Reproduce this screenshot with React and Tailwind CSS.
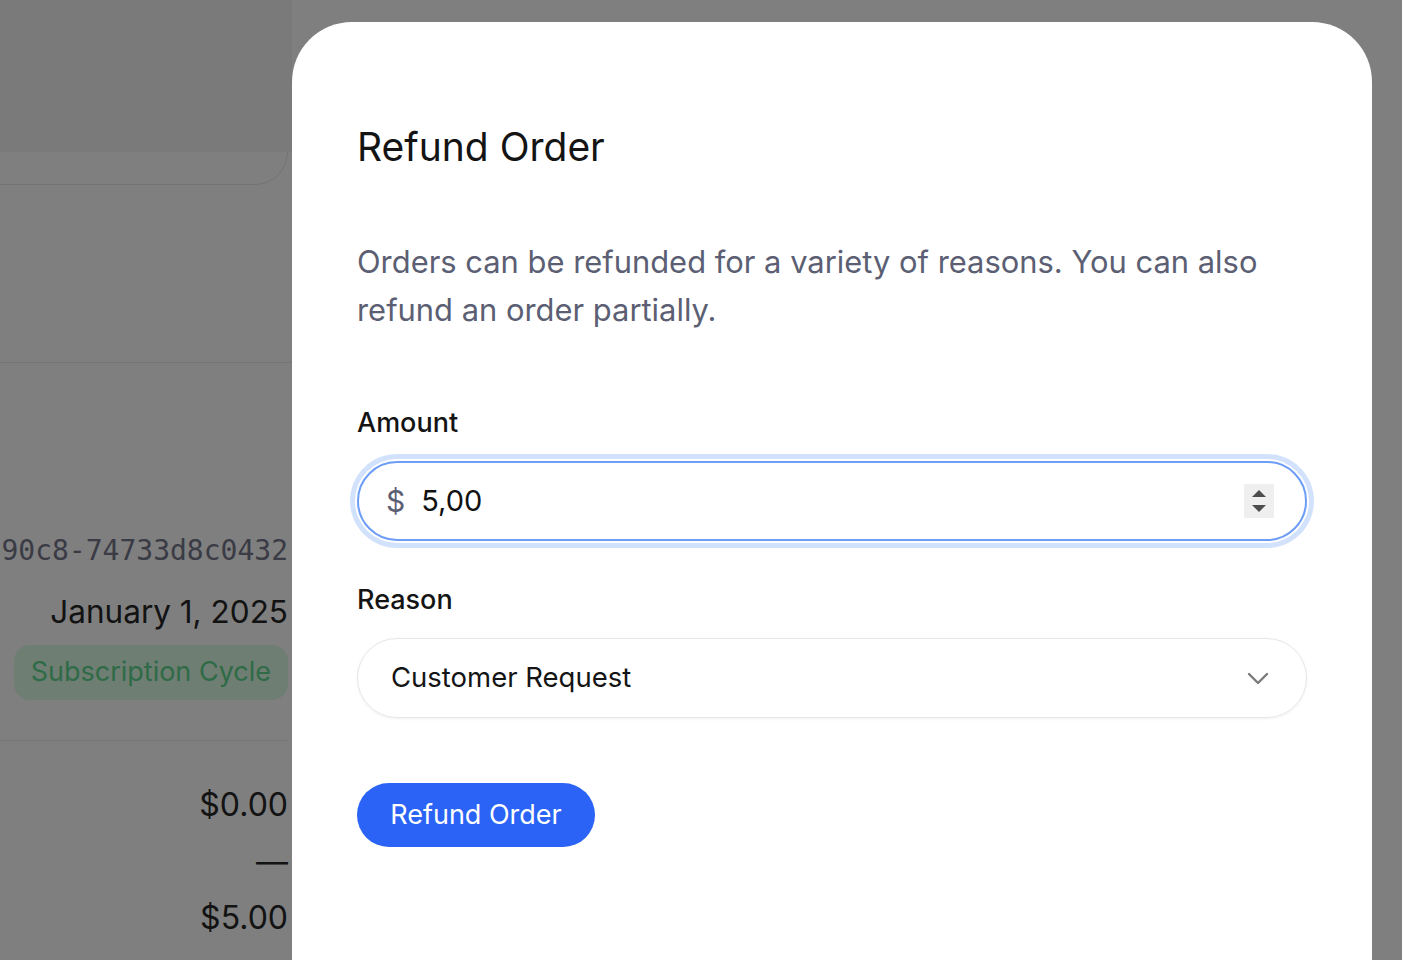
import React from 'react';

const ChevronDown = () => (
  <svg width="22" height="13" viewBox="0 0 22 13" fill="none" stroke="#7a7a7a" strokeWidth="2.4" strokeLinecap="round" strokeLinejoin="round">
    <path d="M2 2l9 9 9-9" />
  </svg>
);

const Spinner = () => (
  <div className="flex h-[34px] w-[30px] flex-col items-center justify-center gap-[8px] bg-[#efefef]">
    <svg width="14" height="7" viewBox="0 0 14 7">
      <path d="M7 0L14 7H0z" fill="#4d4d4d" />
    </svg>
    <svg width="14" height="7" viewBox="0 0 14 7">
      <path d="M0 0h14L7 7z" fill="#4d4d4d" />
    </svg>
  </div>
);

const OrderBackground = () => (
  <div className="flex w-[292px] flex-col">
    <div className="h-[152px] bg-[#f4f4f4]" />
    <div className="h-[33px] w-[288px] rounded-br-[36px] border-r border-b border-[#e6e6e6] bg-white" />
    <div className="h-[177px]" />
    <div className="w-[292px] border-t border-[#ebebeb]" />

    <div className="w-[288px] overflow-hidden whitespace-nowrap">
      <p className="mt-[168px] flex justify-end text-[28px] leading-[40px] text-[#74768a] [font-family:'DejaVu_Sans_Mono',monospace]">
        ab0e-90c8-74733d8c0432
      </p>
      <p className="mt-[21px] text-right text-[31.5px] leading-[40px] text-[#262626]">January 1, 2025</p>
      <div className="mt-[13px] flex justify-end">
        <span className="flex h-[55px] items-center rounded-[16px] bg-[#dcfce7] px-[17px] text-[27px] text-[#5cd68c]">
          Subscription Cycle
        </span>
      </div>
    </div>

    <div className="mt-[40px] w-[288px] border-t border-[#ebebeb]" />

    <div className="w-[288px] text-right text-[32px] leading-[40px] text-[#262626]">
      <p className="mt-[44px]">$0.00</p>
      <p className="mt-[17px]">—</p>
      <p className="mt-[16px]">$5.00</p>
    </div>
  </div>
);

export default function App() {
  return (
    <div className="relative h-[960px] w-full overflow-hidden bg-white [font-family:Inter,'Noto_Sans',sans-serif]">
      <OrderBackground />

      <div className="absolute inset-0 bg-black/50" />

      <div className="absolute top-[22px] left-[292px] h-[1000px] w-[1080px] rounded-[60px] bg-white px-[65px] pt-[101px]">
        <h2 className="text-[39px] leading-[48px] font-normal text-[#141414]">Refund Order</h2>

        <p className="mt-[67px] text-[30.9px] leading-[48px] text-[#5c5f73]">
          Orders can be refunded for a variety of reasons. You can also refund an order partially.
        </p>

        <label className="mt-[71px] block text-[27px] leading-[36px] font-medium text-[#141414]">Amount</label>
        <div className="mt-[20px] flex h-[80px] items-center rounded-full border-2 border-[#6e9df6] pr-[31px] pl-[27px] ring-[5px] ring-[#d3e2fc] ring-offset-2 ring-offset-white">
          <span className="text-[30px] text-[#5c5f73]">$</span>
          <input
            type="text"
            readOnly
            value="5,00"
            className="ml-[16px] flex-1 bg-transparent text-[29px] text-[#111] outline-none"
          />
          <Spinner />
        </div>

        <label className="mt-[41px] block text-[27px] leading-[36px] font-medium text-[#141414]">Reason</label>
        <div className="mt-[20px] flex h-[80px] items-center justify-between rounded-full border border-[#e6e6e6] pr-[37px] pl-[33px] shadow-[0_1px_3px_rgba(0,0,0,0.06)]">
          <span className="text-[27.5px] text-[#141414]">Customer Request</span>
          <ChevronDown />
        </div>

        <button className="mt-[65px] flex h-[64px] w-[238px] items-center justify-center rounded-full bg-[#2a63f5] text-[27px] text-white">
          Refund Order
        </button>
      </div>
    </div>
  );
}
